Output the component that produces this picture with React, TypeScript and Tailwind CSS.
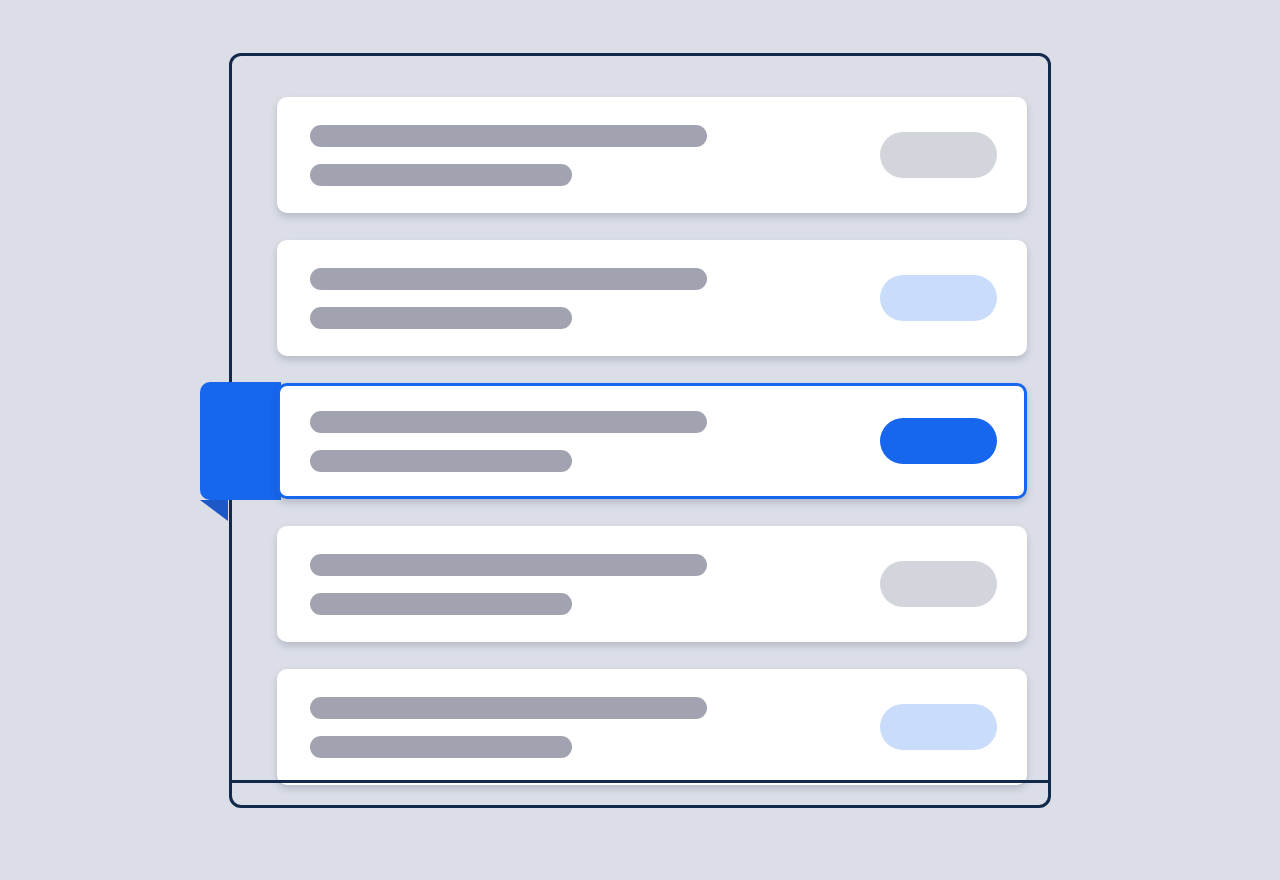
import React from 'react';

type Row = { pill: string; selected?: boolean };

const rows: Row[] = [
  { pill: 'bg-[#d2d5db]' },
  { pill: 'bg-[#cadcfb]' },
  { pill: 'bg-[#1666ee]', selected: true },
  { pill: 'bg-[#d2d5db]' },
  { pill: 'bg-[#cadcfb]' },
];

const Card: React.FC<{ row: Row }> = ({ row }) => (
  <div
    className={
      'relative h-[116px] rounded-[10px] border-[3px] bg-white pl-[30px] pr-[27px] flex items-center justify-between shadow-[0_4px_7px_rgba(40,50,80,0.2)] ' +
      (row.selected ? 'border-[#1666ee]' : 'border-white')
    }
  >
    <div className="flex flex-col gap-[17px]">
      <div className="w-[397px] h-[22px] rounded-full bg-[#a1a3b1]" />
      <div className="w-[262px] h-[22px] rounded-full bg-[#a1a3b1]" />
    </div>
    <div className={'w-[117px] h-[46px] rounded-full ' + row.pill} />
  </div>
);

export default function App() {
  return (
    <div className="min-h-screen bg-[#dbdee6] flex justify-center pt-[53px]">
      <div className="relative w-[822px] h-[755px] border-[3px] border-[#13294b] rounded-[12px] pl-[45px] pr-[21px] pt-[41px]">
        <div className="flex flex-col gap-[27px]">
          {rows.map((row, i) =>
            row.selected ? (
              <div key={i} className="relative">
                {/* tab sticking out on the left */}
                <div className="absolute left-[-77px] top-[-1px] w-[81px] h-[118px] rounded-l-[10px] bg-[#1666ee]" />
                <svg
                  className="absolute left-[-77px] top-[117px]"
                  width="28"
                  height="21"
                  viewBox="0 0 28 21"
                >
                  <polygon points="0,0 28,0 28,21" fill="#1d58c8" />
                </svg>
                <Card row={row} />
              </div>
            ) : (
              <Card key={i} row={row} />
            )
          )}
        </div>
        <div className="absolute left-0 right-0 top-[724px] h-[3px] bg-[#13294b]" />
      </div>
    </div>
  );
}
